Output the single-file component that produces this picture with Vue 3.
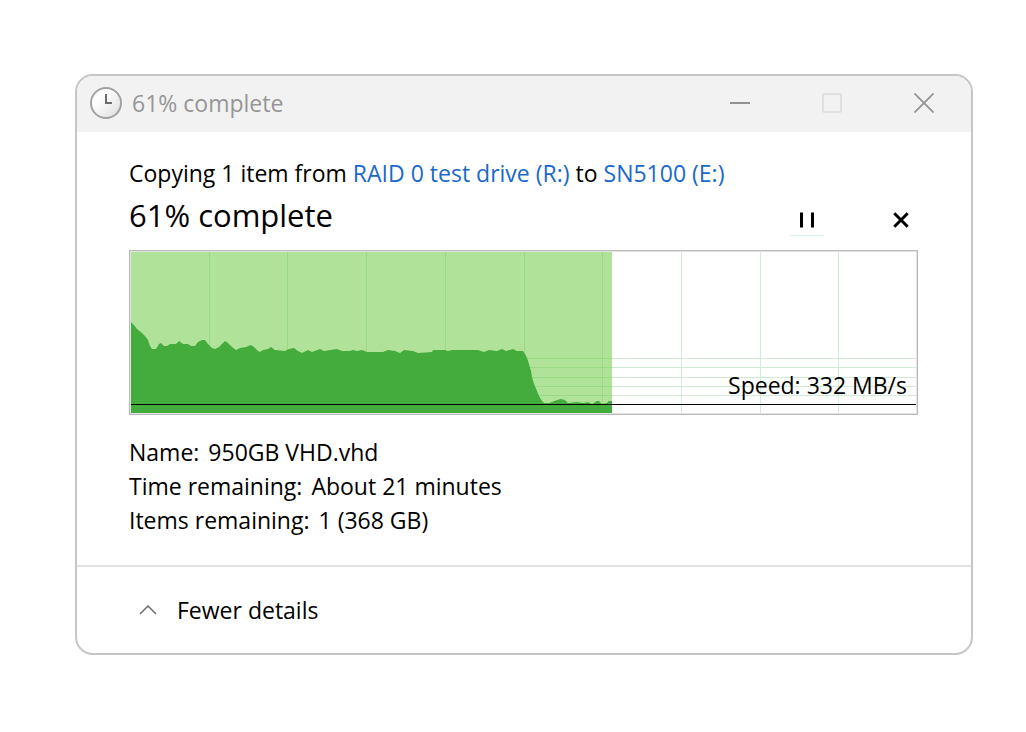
<script setup>
import { ref } from 'vue'

const percent = ref(61)
const expanded = ref(true)

const columns = [78, 156, 235, 314, 393, 471, 550, 629, 707]
const rows = [106, 115, 125, 134, 143]

const samples = [
  [0, 70], [3, 73], [6, 77], [11, 81], [14, 84], [17, 88], [19, 94], [21, 97], [25, 97], [28, 92], [30, 91],
  [33, 94], [36, 94], [39, 92], [45, 92], [48, 89], [52, 92], [57, 92], [60, 94], [64, 94], [67, 90],
  [71, 88], [74, 88], [77, 92], [81, 96], [84, 97], [88, 95], [91, 92], [94, 89], [97, 91], [101, 95],
  [105, 98], [109, 96], [115, 95], [120, 93], [123, 95], [127, 99], [129, 100], [132, 98], [137, 97],
  [140, 95], [144, 98], [154, 99], [158, 97], [163, 96], [167, 99], [171, 101], [177, 98], [181, 100],
  [189, 97], [193, 99], [206, 97], [211, 99], [219, 99], [222, 98], [226, 99], [231, 98], [236, 100],
  [252, 100], [257, 98], [264, 99], [269, 101], [273, 98], [282, 99], [287, 101], [301, 100], [302, 98],
  [314, 98], [317, 99], [321, 98], [347, 98], [353, 100], [358, 98], [366, 99], [371, 97], [375, 99],
  [382, 97], [386, 99], [392, 99], [394, 102], [396, 106], [398, 112], [400, 119], [401, 125], [403, 132],
  [406, 139], [408, 144], [411, 149], [413, 151], [418, 151], [421, 150], [426, 148], [430, 147],
  [434, 148], [437, 151], [446, 150], [452, 151], [457, 150], [461, 152], [466, 149], [468, 149],
  [471, 152], [476, 151], [478, 149], [481, 149]
]
const area = `0,161 ${samples.map((p) => p.join(',')).join(' ')} 481,161`
</script>

<template>
  <main class="desktop">
    <section class="window" aria-label="File copy progress">
      <header class="titlebar">
        <svg class="clock" viewBox="0 0 32 32" aria-hidden="true">
          <defs>
            <linearGradient id="face" x1="0" y1="0" x2="1" y2="1">
              <stop offset="0.3" stop-color="#ffffff" />
              <stop offset="1" stop-color="#dcdcdc" />
            </linearGradient>
          </defs>
          <circle cx="16" cy="16" r="15" fill="url(#face)" stroke="#a2a2a2" stroke-width="2" />
          <path d="M16 7V16H22" fill="none" stroke="#6c6c6c" stroke-width="2" />
        </svg>
        <span class="caption">{{ percent }}% complete</span>
        <button class="winbtn" type="button" aria-label="Minimize">
          <svg viewBox="0 0 20 20"><path d="M0 10H20" stroke="#929292" stroke-width="2" /></svg>
        </button>
        <button class="winbtn" type="button" aria-label="Maximize" disabled>
          <svg viewBox="0 0 20 20"><rect x="1" y="1" width="18" height="18" rx="1.5" fill="none" stroke="#e0e0e0" stroke-width="2" /></svg>
        </button>
        <button class="winbtn" type="button" aria-label="Close">
          <svg viewBox="0 0 20 20"><path d="M0.5 0.5L19.5 19.5M19.5 0.5L0.5 19.5" stroke="#929292" stroke-width="1.7" /></svg>
        </button>
      </header>

      <div class="content">
        <p class="summary">Copying 1 item from <a href="#source">RAID 0 test drive (R:)</a> to <a href="#target">SN5100 (E:)</a></p>
        <div class="status">
          <h1>{{ percent }}% complete</h1>
          <button class="action pause" type="button" aria-label="Pause">
            <svg viewBox="0 0 16 16"><path d="M2.5 0.5V15.5M13.5 0.5V15.5" stroke="#000" stroke-width="3" /></svg>
          </button>
          <button class="action" type="button" aria-label="Cancel">
            <svg viewBox="0 0 16 16"><path d="M1.3 1.3L14.7 14.7M14.7 1.3L1.3 14.7" stroke="#000" stroke-width="3" /></svg>
          </button>
        </div>

        <div class="chart">
          <svg viewBox="0 0 785 161" preserveAspectRatio="none" role="img" aria-label="Transfer speed">
            <g fill="#d0ecd3">
              <rect v-for="x in columns" :key="x" :x="x" y="0" width="1" height="161" />
              <rect v-for="y in rows" :key="y" x="0" :y="y" width="785" height="1" />
            </g>
            <rect width="481" height="161" fill="#b0e399" />
            <g fill="#99da84">
              <rect v-for="x in columns.slice(0, 6)" :key="x" :x="x" y="0" width="1" height="161" />
              <rect v-for="y in rows" :key="y" x="0" :y="y" width="481" height="1" />
            </g>
            <polygon :points="area" fill="#44ac3d" />
            <rect y="152" width="785" height="1" fill="#000" />
          </svg>
          <span class="speed">Speed: 332 MB/s</span>
        </div>

        <dl v-show="expanded" class="details">
          <div><dt>Name:</dt><dd>950GB VHD.vhd</dd></div>
          <div><dt>Time remaining:</dt><dd>About 21 minutes</dd></div>
          <div><dt>Items remaining:</dt><dd>1 (368 GB)</dd></div>
        </dl>
      </div>

      <footer class="footer">
        <button class="toggle" type="button" :aria-expanded="expanded" @click="expanded = !expanded">
          <svg viewBox="0 0 18 10" aria-hidden="true"><path d="M1 9L9 1L17 9" fill="none" stroke="#6a6a6a" stroke-width="1.5" /></svg>
          <span>{{ expanded ? 'Fewer' : 'More' }} details</span>
        </button>
      </footer>
    </section>
  </main>
</template>

<style>
body {
  margin: 0;
  background: #fff;
}
</style>

<style scoped>
.desktop {
  padding: 74px 53px 77px 75px;
  font-family: "Open Sans", "Noto Sans", sans-serif;
  font-size: 23px;
  line-height: 34px;
  color: #000;
}
.window {
  border: 2px solid #c6c6c6;
  border-radius: 18px;
  background: #fff;
  overflow: hidden;
}
.titlebar {
  box-sizing: border-box;
  display: flex;
  align-items: center;
  height: 56px;
  padding: 0 1px 2px 13px;
  background: #f2f2f2;
  color: #969696;
}
.clock {
  width: 32px;
  height: 32px;
  margin-right: 10px;
}
.caption {
  flex: 1;
}
button {
  display: flex;
  align-items: center;
  border: 0;
  padding: 0;
  background: none;
  font: inherit;
  color: inherit;
}
.winbtn {
  width: 92px;
  height: 54px;
  justify-content: center;
}
.winbtn svg {
  width: 20px;
  height: 20px;
}
.content {
  padding: 24px 53px 28px 52px;
}
.summary {
  margin: 0;
  white-space: nowrap;
}
a {
  color: #1a69c8;
  text-decoration: none;
}
.status {
  display: flex;
  align-items: center;
  height: 60px;
}
h1 {
  flex: 1;
  margin: 0;
  padding-bottom: 10px;
  font-size: 31px;
  font-weight: 400;
  line-height: 40px;
}
.action {
  width: 34px;
  height: 32px;
  justify-content: center;
  border-bottom: 1px solid transparent;
}
.action svg {
  width: 16px;
  height: 16px;
}
.pause {
  margin-right: 60px;
  border-bottom-color: #d8f2f4;
}
.chart {
  position: relative;
  border: 1px solid #b9b9b9;
}
.chart svg {
  display: block;
  box-sizing: border-box;
  width: 100%;
  height: 163px;
  border: 1px solid #e3e3e3;
}
.speed {
  position: absolute;
  right: 10px;
  bottom: 12px;
}
.details {
  margin: 20px 0 0;
}
.details div {
  display: flex;
  gap: 9px;
}
dd {
  margin: 0;
}
.footer {
  padding: 26px 62px;
  border-top: 2px solid #e2e2e2;
}
.toggle {
  gap: 20px;
}
.toggle svg {
  width: 18px;
  height: 10px;
}
</style>
